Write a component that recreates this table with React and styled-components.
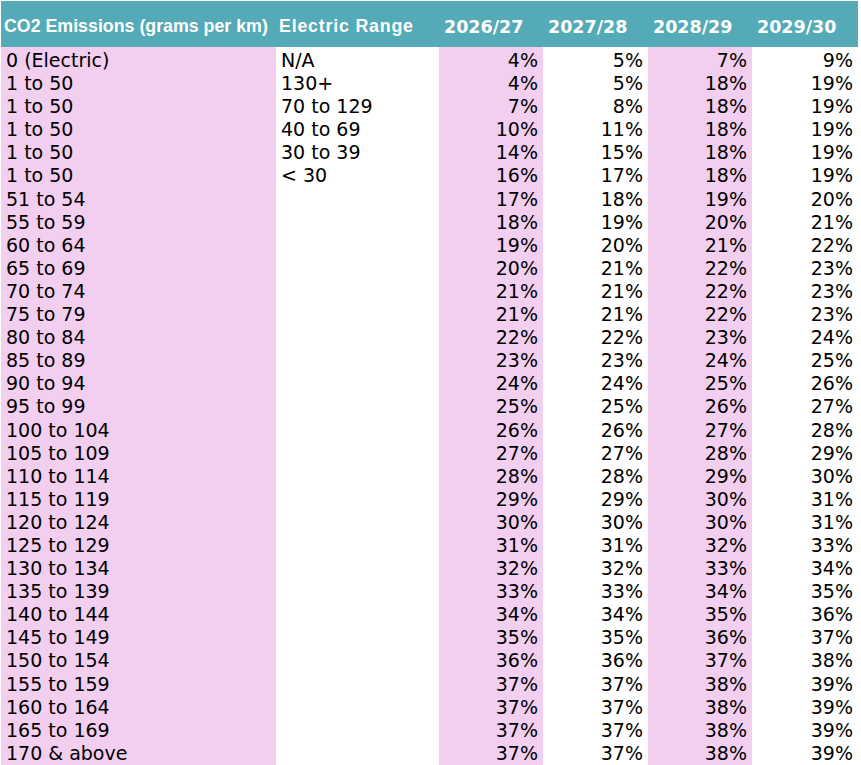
import React from 'react'
import styled, { createGlobalStyle } from 'styled-components'

const GlobalStyle = createGlobalStyle`
  html, body {
    margin: 0;
    padding: 0;
    background: #fff;
    overflow: hidden;
  }
`

const COLS = '275px 163px 104px 105px 104px 106px'
const PINK = '#f2ceef'
const TEAL = '#54aab6'

const Sheet = styled.div`
  padding: 1px 0 0 1px;
  width: 857px;
  height: 764px;
  overflow: hidden;
`

const HeaderRow = styled.div`
  display: grid;
  grid-template-columns: ${COLS};
  height: 46px;
  background: ${TEAL};
`

const HeaderCell = styled.div`
  display: flex;
  align-items: center;
  padding: 5px 0 0 ${props => props.$numeric ? 5 : 3}px;
  color: #fff;
  font-weight: bold;
  white-space: nowrap;
  font-family: ${props => props.$numeric
    ? '"DejaVu Sans", sans-serif'
    : '"Liberation Sans", Arial, sans-serif'};
  font-size: ${props => props.$numeric ? '17.5px' : '17.8px'};
  letter-spacing: ${props => props.$wide ? '0.8px' : '0'};
`

const Row = styled.div`
  display: grid;
  grid-template-columns: ${COLS};
  height: 23.1px;
`

const Cell = styled.div`
  box-sizing: border-box;
  height: 100%;
  padding: 3px ${props => props.$right ? 5 : 0}px 0 ${props => props.$right ? 0 : 5}px;
  line-height: 20.1px;
  background: ${props => props.$pink ? PINK : '#fff'};
  text-align: ${props => props.$right ? 'right' : 'left'};
  color: #000;
  font-family: "DejaVu Sans", sans-serif;
  font-size: 19px;
  white-space: nowrap;
`

const headers = ['CO2 Emissions (grams per km)', 'Electric Range', '2026/27', '2027/28', '2028/29', '2029/30']

const rows = [
  ['0 (Electric)', 'N/A', 4, 5, 7, 9],
  ['1 to 50', '130+', 4, 5, 18, 19],
  ['1 to 50', '70 to 129', 7, 8, 18, 19],
  ['1 to 50', '40 to 69', 10, 11, 18, 19],
  ['1 to 50', '30 to 39', 14, 15, 18, 19],
  ['1 to 50', '< 30', 16, 17, 18, 19],
  ['51 to 54', '', 17, 18, 19, 20],
  ['55 to 59', '', 18, 19, 20, 21],
  ['60 to 64', '', 19, 20, 21, 22],
  ['65 to 69', '', 20, 21, 22, 23],
  ['70 to 74', '', 21, 21, 22, 23],
  ['75 to 79', '', 21, 21, 22, 23],
  ['80 to 84', '', 22, 22, 23, 24],
  ['85 to 89', '', 23, 23, 24, 25],
  ['90 to 94', '', 24, 24, 25, 26],
  ['95 to 99', '', 25, 25, 26, 27],
  ['100 to 104', '', 26, 26, 27, 28],
  ['105 to 109', '', 27, 27, 28, 29],
  ['110 to 114', '', 28, 28, 29, 30],
  ['115 to 119', '', 29, 29, 30, 31],
  ['120 to 124', '', 30, 30, 30, 31],
  ['125 to 129', '', 31, 31, 32, 33],
  ['130 to 134', '', 32, 32, 33, 34],
  ['135 to 139', '', 33, 33, 34, 35],
  ['140 to 144', '', 34, 34, 35, 36],
  ['145 to 149', '', 35, 35, 36, 37],
  ['150 to 154', '', 36, 36, 37, 38],
  ['155 to 159', '', 37, 37, 38, 39],
  ['160 to 164', '', 37, 37, 38, 39],
  ['165 to 169', '', 37, 37, 38, 39],
  ['170 & above', '', 37, 37, 38, 39],
  ['', '', '', '', '', ''],
]

// pink stripes on columns 1, 3 and 5
const isPink = i => i % 2 === 0

const App = () => (
  <>
    <GlobalStyle />
    <Sheet>
      <HeaderRow>
        {headers.map((h, i) => (
          <HeaderCell key={h} $numeric={i > 1} $wide={i === 1}>{h}</HeaderCell>
        ))}
      </HeaderRow>
      {rows.map((r, ri) => (
        <Row key={ri}>
          {r.map((v, i) => (
            <Cell key={i} $pink={isPink(i)} $right={i > 1}>
              {i > 1 && v !== '' ? `${v}%` : v}
            </Cell>
          ))}
        </Row>
      ))}
    </Sheet>
  </>
)

export default App
